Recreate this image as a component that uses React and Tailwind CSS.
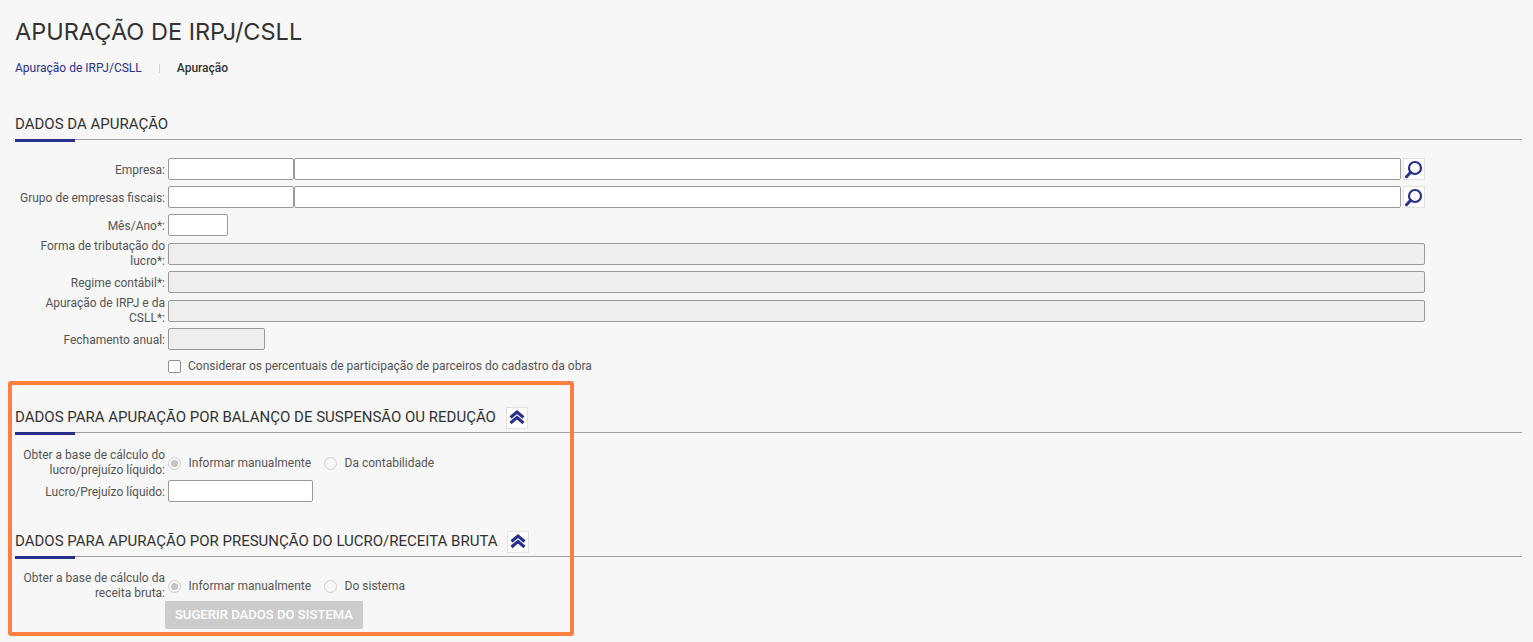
import React from 'react';

const font = { fontFamily: 'Roboto, sans-serif' };

function SearchButton() {
    return (
        <button type="button" className="ml-[2px] flex h-[22px] w-[22px] shrink-0 items-center justify-center border border-[#e3e3e3] bg-white">
            <svg width="20" height="20" viewBox="0 0 20 20" fill="none" stroke="#28308c">
                <circle cx="11" cy="9" r="6" strokeWidth="2.2" />
                <path d="M6.7 13.3 L2.5 17.8" strokeWidth="3" strokeLinecap="round" />
            </svg>
        </button>
    );
}

function CollapseButton({ className = '' }) {
    return (
        <button type="button" className={`flex h-[22px] w-[22px] shrink-0 items-center justify-center border border-[#e3e3e3] bg-white ${className}`}>
            <svg width="16" height="15" viewBox="0 0 16 15" fill="none" stroke="#28308c" strokeWidth="3">
                <path d="M1.5 7.5 L8 2 L14.5 7.5" />
                <path d="M1.5 13 L8 7.5 L14.5 13" />
            </svg>
        </button>
    );
}

function SectionTitle({ children, className = '', action }) {
    return (
        <div className={`relative border-b border-[#a0a0a0] ${className}`}>
            <div className="flex h-[29px] items-center">
                <h2 className="text-[15px] leading-[29px] text-[#333333]">{children}</h2>
                {action}
            </div>
            <div className="absolute -bottom-[3px] left-0 h-[3px] w-[60px] bg-[#28308c]" />
        </div>
    );
}

function Row({ label, twoLines, className = '', children }) {
    return (
        <div className={`flex items-center ${twoLines ? 'mt-[7px]' : 'mt-[6px]'} ${className}`}>
            <label className={`mr-[3px] w-[150px] shrink-0 text-right text-[12px] leading-[15px] text-[#555555] ${twoLines ? '-my-1' : 'pt-[2px]'}`}>
                {label}
            </label>
            {children}
        </div>
    );
}

const inputBase = 'h-[22px] rounded-[2px] border border-[#9a9a9a] bg-white';
const inputOff = 'h-[22px] rounded-[2px] border border-[#9a9a9a] bg-[#efefef]';

function Radio({ checked }) {
    return (
        <span className="flex h-[13px] w-[13px] shrink-0 items-center justify-center rounded-full border border-[#cfcfcf] bg-[#f7f7f7]">
            {checked && <span className="h-[7px] w-[7px] rounded-full bg-[#c4c4c4]" />}
        </span>
    );
}

function RadioOption({ checked, children, className = '' }) {
    return (
        <span className={`flex items-center ${className}`}>
            <Radio checked={checked} />
            <span className="ml-[7.5px] text-[12px] text-[#555555]">{children}</span>
        </span>
    );
}

export default function App() {
    return (
        <div className="relative h-[642px] overflow-hidden bg-[#f7f7f7] pl-[15px] pr-[11px]" style={font}>
            <h1 className="pt-[18px] text-[23.5px] leading-[27px] text-[#333333]" style={{ fontFamily: 'Inter, sans-serif' }}>
                APURAÇÃO DE IRPJ/CSLL
            </h1>

            <div className="mt-[16px] flex items-center text-[12px] leading-[15px]">
                <a className="text-[#28308c]">Apuração de IRPJ/CSLL</a>
                <span className="mx-[17px] h-[9px] w-px bg-[#d5d5d5]" />
                <span className="font-medium text-[#333333]">Apuração</span>
            </div>

            <SectionTitle className="mt-[34px]">DADOS DA APURAÇÃO</SectionTitle>

            <div className="pr-[97px] pt-[12px]">
                <Row label="Empresa:">
                    <div className={`${inputBase} w-[126px]`} />
                    <div className={`${inputBase} flex-1`} />
                    <SearchButton />
                </Row>
                <Row label="Grupo de empresas fiscais:">
                    <div className={`${inputBase} w-[126px]`} />
                    <div className={`${inputBase} flex-1`} />
                    <SearchButton />
                </Row>
                <Row label="Mês/Ano*:">
                    <div className={`${inputBase} w-[60px]`} />
                </Row>
                <Row label="Forma de tributação do lucro*:" twoLines>
                    <div className={`${inputOff} flex-1`} />
                </Row>
                <Row label="Regime contábil*:">
                    <div className={`${inputOff} flex-1`} />
                </Row>
                <Row label="Apuração de IRPJ e da CSLL*:" twoLines>
                    <div className={`${inputOff} flex-1`} />
                </Row>
                <Row label="Fechamento anual:">
                    <div className={`${inputOff} w-[97px]`} />
                </Row>
                <div className="mt-[9px] flex items-center pl-[153px]">
                    <span className="h-[13px] w-[13px] rounded-[2px] border border-[#8f8f8f] bg-white" />
                    <span className="ml-[7px] text-[12px] leading-[15px] text-[#555555]">
                        Considerar os percentuais de participação de parceiros do cadastro da obra
                    </span>
                </div>
            </div>

            <SectionTitle className="mt-[29px]" action={<CollapseButton className="ml-[10px]" />}>
                DADOS PARA APURAÇÃO POR BALANÇO DE SUSPENSÃO OU REDUÇÃO
            </SectionTitle>
            <div className="pt-[12px]">
                <Row label="Obter a base de cálculo do lucro/prejuízo líquido:" twoLines>
                    <RadioOption checked>Informar manualmente</RadioOption>
                    <RadioOption className="ml-[13px]">Da contabilidade</RadioOption>
                </Row>
                <Row label="Lucro/Prejuízo líquido:">
                    <div className={`${inputBase} w-[145px]`} />
                </Row>
            </div>

            <SectionTitle className="mt-[25px]" action={<CollapseButton className="ml-[9px]" />}>
                DADOS PARA APURAÇÃO POR PRESUNÇÃO DO LUCRO/RECEITA BRUTA
            </SectionTitle>
            <div className="pt-[11px]">
                <Row label="Obter a base de cálculo da receita bruta:" twoLines>
                    <RadioOption checked>Informar manualmente</RadioOption>
                    <RadioOption className="ml-[13px]">Do sistema</RadioOption>
                </Row>
                <button type="button" className="ml-[150px] mt-[4px] block h-[28px] w-[198px] rounded-[2px] bg-[#cccccc] text-[13.1px] font-medium text-white">
                    SUGERIR DADOS DO SISTEMA
                </button>
            </div>

            {/* destaque laranja sobre a tela */}
            <div className="pointer-events-none absolute left-[8px] top-[381px] h-[255px] w-[566px] rounded-[3px] border-4 border-[#ff7f41]" />
        </div>
    );
}
